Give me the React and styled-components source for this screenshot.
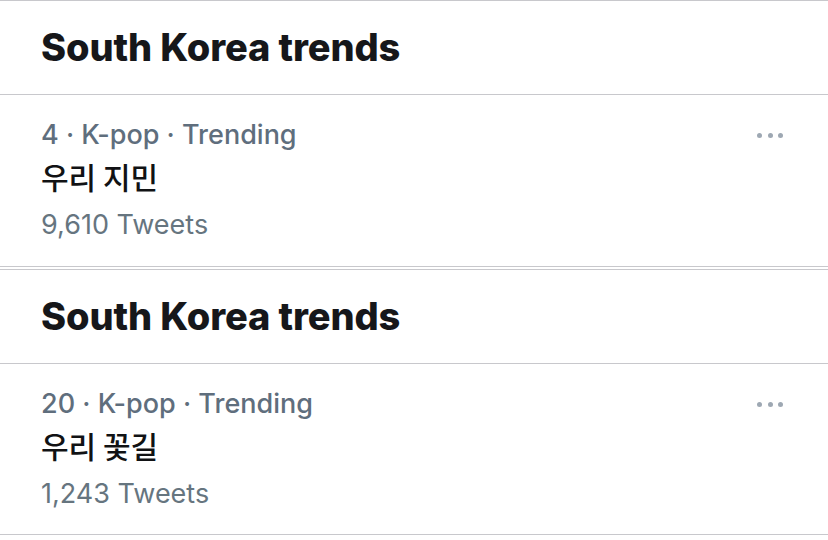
import React from "react";
import styled, { createGlobalStyle } from "styled-components";

const Global = createGlobalStyle`
  html, body {
    margin: 0;
    padding: 0;
    background: #ffffff;
  }
  body {
    font-family: Inter, "Noto Sans CJK KR", "Noto Sans", sans-serif;
    -webkit-font-smoothing: antialiased;
  }
`;

const Page = styled.div`
  width: 828px;
  height: 540px;
  overflow: hidden;
  display: flex;
  flex-direction: column;
  gap: 2px;
`;

const Section = styled.section`
  border-top: 1px solid #c8c8cc;
  border-bottom: 1px solid #c8c8cc;
`;

const Header = styled.div`
  height: 94px;
  box-sizing: border-box;
  padding-left: 41px;
  padding-bottom: 2px;
  display: flex;
  align-items: center;
  border-bottom: 1px solid #c8c8cc;
`;

const Title = styled.h2`
  margin: 0;
  font-size: 38px;
  font-weight: 800;
  color: #16171a;
  letter-spacing: -0.1px;
`;

const Item = styled.div`
  height: ${(p) => p.$h}px;
  box-sizing: border-box;
  padding: 22px 45px 0 41px;
  display: flex;
  justify-content: space-between;
  align-items: flex-start;
`;

const Info = styled.div`
  display: flex;
  flex-direction: column;
`;

const Meta = styled.div`
  font-size: 27px;
  font-weight: 500;
  color: #5f6e7d;
  line-height: 36px;
`;

const Name = styled.div`
  font-size: 30px;
  font-weight: 500;
  color: #111214;
  line-height: 47px;
  font-family: "Noto Sans CJK KR", sans-serif;
`;

const Count = styled.div`
  font-size: 27px;
  font-weight: 400;
  color: #66757f;
  line-height: 50px;
`;

const More = styled.div`
  display: flex;
  gap: 5.5px;
  margin-top: 16px;
  span {
    width: 5px;
    height: 5px;
    border-radius: 50%;
    background: #9ea8b3;
  }
`;

const trends = [
  { rank: 4, topic: "K-pop", name: "우리 지민", count: "9,610", h: 171 },
  { rank: 20, topic: "K-pop", name: "우리 꽃길", count: "1,243", h: 170 },
];

export default function App() {
  return (
    <>
      <Global />
      <Page>
        {trends.map((t) => (
          <Section key={t.rank}>
            <Header>
              <Title>South Korea trends</Title>
            </Header>
            <Item $h={t.h}>
              <Info>
                <Meta>{t.rank} · {t.topic} · Trending</Meta>
                <Name>{t.name}</Name>
                <Count>{t.count} Tweets</Count>
              </Info>
              <More>
                <span />
                <span />
                <span />
              </More>
            </Item>
          </Section>
        ))}
      </Page>
    </>
  );
}
